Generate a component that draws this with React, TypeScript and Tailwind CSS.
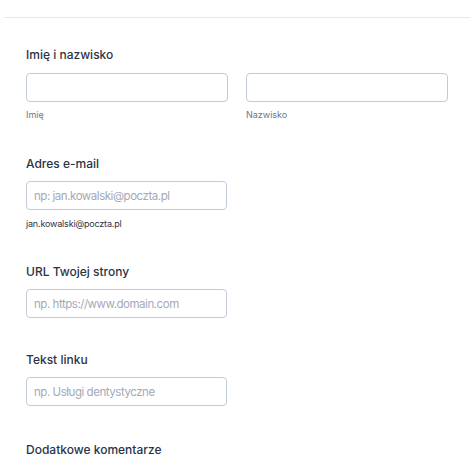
import React from "react"

const font = { fontFamily: "Inter, 'Noto Sans', sans-serif" }

function Label({ children }: { children: React.ReactNode }) {
    return <div className="text-[12px] font-medium leading-4 text-[#2c3345]">{children}</div>
}

function Field({ placeholder, wide }: { placeholder?: string; wide?: boolean }) {
    return (
        <input
            className={
                (wide ? "w-[202px]" : "w-[201px]") +
                " h-[29px] rounded-[4px] border border-[#c3cad8] bg-white px-[7px] text-[11.5px] tracking-[-0.04em] text-[#2c3345] placeholder:text-[#a3a9b8] outline-none"
            }
            placeholder={placeholder}
        />
    )
}

export default function App() {
    return (
        <div className="min-h-[459px] w-[474px] bg-white" style={font}>
            <div className="px-[4px] pt-[17px]">
                <div className="h-px bg-[#e6e8ee]" />
            </div>
            <div className="flex flex-col pl-[26px] pt-[29px]">
                <Label>Imię i nazwisko</Label>
                <div className="mt-[10px] flex gap-[18px]">
                    <div className="flex flex-col">
                        <Field wide />
                        <span className="mt-[7px] text-[9px] leading-3 text-[#6f7687]">Imię</span>
                    </div>
                    <div className="flex flex-col">
                        <Field wide />
                        <span className="mt-[7px] text-[9px] leading-3 text-[#6f7687]">Nazwisko</span>
                    </div>
                </div>

                <div className="mt-[35px]">
                    <Label>Adres e-mail</Label>
                </div>
                <div className="mt-[9px]">
                    <Field placeholder="np: jan.kowalski@poczta.pl" />
                </div>
                <span className="mt-[8px] text-[9px] leading-3 tracking-[-0.02em] text-[#2c3345]">jan.kowalski@poczta.pl</span>

                <div className="mt-[34px]">
                    <Label>URL Twojej strony</Label>
                </div>
                <div className="mt-[9px]">
                    <Field placeholder="np. https://www.domain.com" />
                </div>

                <div className="mt-[34px]">
                    <Label>Tekst linku</Label>
                </div>
                <div className="mt-[9px]">
                    <Field placeholder="np. Usługi dentystyczne" />
                </div>

                <div className="mt-[36px]">
                    <Label>Dodatkowe komentarze</Label>
                </div>
            </div>
        </div>
    )
}
